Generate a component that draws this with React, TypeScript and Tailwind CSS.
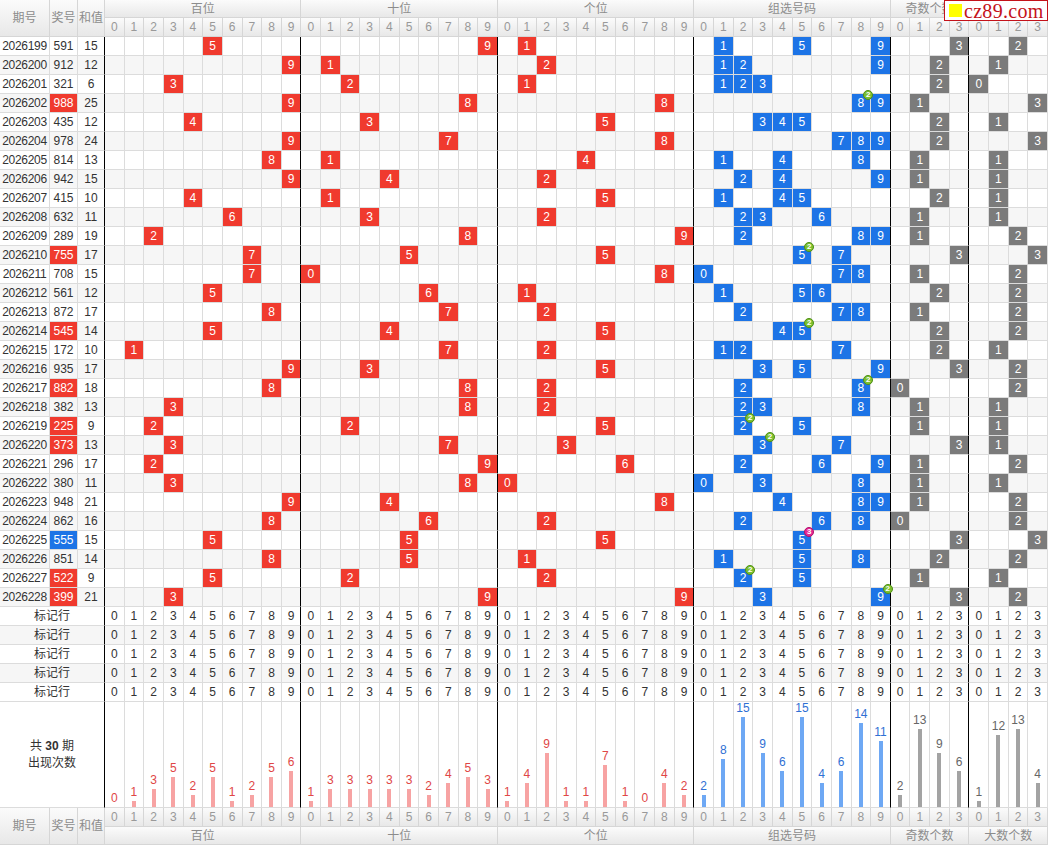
import React from "react";

const COLS = "grid grid-cols-[50px_28px_27px_repeat(48,minmax(0,1fr))]";

const draws: [string, string][] = [
  ["2026199", "591"], ["2026200", "912"], ["2026201", "321"], ["2026202", "988"],
  ["2026203", "435"], ["2026204", "978"], ["2026205", "814"], ["2026206", "942"],
  ["2026207", "415"], ["2026208", "632"], ["2026209", "289"], ["2026210", "755"],
  ["2026211", "708"], ["2026212", "561"], ["2026213", "872"], ["2026214", "545"],
  ["2026215", "172"], ["2026216", "935"], ["2026217", "882"], ["2026218", "382"],
  ["2026219", "225"], ["2026220", "373"], ["2026221", "296"], ["2026222", "380"],
  ["2026223", "948"], ["2026224", "862"], ["2026225", "555"], ["2026226", "851"],
  ["2026227", "522"], ["2026228", "399"],
];

const groups = [
  { name: "百位", size: 10 },
  { name: "十位", size: 10 },
  { name: "个位", size: 10 },
  { name: "组选号码", size: 10 },
  { name: "奇数个数", size: 4 },
  { name: "大数个数", size: 4 },
];

// column index -> digit label
const colDigits: number[] = [];
groups.forEach((g) => {
  for (let i = 0; i < g.size; i++) colDigits.push(i);
});
// last column of each group gets the black line
const boundaries = new Set([9, 19, 29, 39, 43]);

type Cell = { kind: "red" | "blue" | "gray" | null; text?: string; badge?: number; hits: number };

function buildCells(num: string): Cell[] {
  const d = num.split("").map(Number);
  const cells: Cell[] = Array.from({ length: 48 }, () => ({ kind: null, hits: 0 }));
  cells[d[0]] = { kind: "red", text: String(d[0]), hits: 1 };
  cells[10 + d[1]] = { kind: "red", text: String(d[1]), hits: 1 };
  cells[20 + d[2]] = { kind: "red", text: String(d[2]), hits: 1 };
  const counts: Record<number, number> = {};
  d.forEach((x) => (counts[x] = (counts[x] || 0) + 1));
  Object.keys(counts).forEach((k) => {
    const n = Number(k);
    cells[30 + n] = { kind: "blue", text: k, badge: counts[n] > 1 ? counts[n] : undefined, hits: counts[n] };
  });
  const odd = d.filter((x) => x % 2 === 1).length;
  const big = d.filter((x) => x >= 5).length;
  cells[40 + odd] = { kind: "gray", text: String(odd), hits: 1 };
  cells[44 + big] = { kind: "gray", text: String(big), hits: 1 };
  return cells;
}

const allCells = draws.map(([, n]) => buildCells(n));
const stats: number[] = Array.from({ length: 48 }, (_, c) => allCells.reduce((s, r) => s + r[c].hits, 0));

const fill = {
  red: "bg-[#f03a2e] text-white",
  blue: "bg-[#1d74e6] text-white",
  gray: "bg-[#7b7b7b] text-white",
};

function lineCls(c: number) {
  return boundaries.has(c) ? "border-r-black" : "border-r-[#dcdcdc]";
}

const headBg = "bg-linear-to-b from-[#fbfbfb] to-[#e8e8e8]";

function Header() {
  return (
    <div className={`${COLS} grid-rows-[18px_19px] text-[#8c8c8c]`}>
      {["期号", "奖号", "和值"].map((t) => (
        <div key={t} className={`row-span-2 flex items-center justify-center border-r border-b border-[#d6d6d6] text-[12px] ${headBg}`}>
          {t}
        </div>
      ))}
      {groups.map((g) => (
        <div
          key={g.name}
          className={`flex items-center justify-center border-r border-b border-[#d6d6d6] text-[12px] ${headBg} ${g.size === 10 ? "col-span-10" : "col-span-4"}`}
        >
          {g.name}
        </div>
      ))}
      {colDigits.map((d, c) => (
        <div key={c} className={`flex items-center justify-center border-r border-b border-[#d6d6d6] text-[12px] text-[#999] ${headBg}`}>
          {d}
        </div>
      ))}
    </div>
  );
}

function DataRow({ issue, num, idx }: { issue: string; num: string; idx: number }) {
  const d = num.split("").map(Number);
  const sum = d[0] + d[1] + d[2];
  const distinct = new Set(d).size;
  const cells = allCells[idx];
  const numBg = distinct === 1 ? "bg-[#1d74e6] text-white" : distinct === 2 ? "bg-[#f03a2e] text-white" : "";
  const rowBg = idx % 2 === 1 ? "bg-[#f6f6f6]" : "bg-white";
  return (
    <div className={`${COLS} h-[19px] ${rowBg} text-[#333]`}>
      <div className="flex items-center justify-center border-r border-b border-[#dcdcdc] tracking-[-0.3px]">{issue}</div>
      <div className={`flex items-center justify-center border-r border-b border-[#dcdcdc] ${numBg}`}>{num}</div>
      <div className="flex items-center justify-center border-r border-b border-r-black border-b-[#dcdcdc]">{sum}</div>
      {cells.map((cell, c) => (
        <div
          key={c}
          className={`relative flex items-center justify-center border-r border-b border-b-[#dcdcdc] ${lineCls(c)} ${cell.kind ? fill[cell.kind] : ""}`}
        >
          {cell.text}
          {cell.badge && (
            <span
              className={`absolute -top-[4px] -right-[3px] z-10 flex h-[10px] w-[10px] items-center justify-center rounded-full border text-[8px] font-bold leading-none text-white ${
                cell.badge === 3 ? "border-[#b0106a] bg-[#e62a95]" : "border-[#4f8f14] bg-[#7cc030]"
              }`}
            >
              {cell.badge}
            </span>
          )}
        </div>
      ))}
    </div>
  );
}

function MarkRow({ idx }: { idx: number }) {
  return (
    <div className={`${COLS} h-[19px] ${idx % 2 === 1 ? "bg-[#f6f6f6]" : "bg-white"} text-[#333]`}>
      <div className="col-span-3 flex items-center justify-center border-r border-b border-r-black border-b-[#dcdcdc] text-[12px]">
        标记行
      </div>
      {colDigits.map((d, c) => (
        <div key={c} className={`flex items-center justify-center border-r border-b border-b-[#dcdcdc] ${lineCls(c)}`}>
          {d}
        </div>
      ))}
    </div>
  );
}

function StatsRow() {
  const tone = (c: number) =>
    c < 30
      ? { bar: "bg-[#f7a3a3]", txt: "text-[#e04646]" }
      : c < 40
      ? { bar: "bg-[#6ea8f4]", txt: "text-[#2f70d4]" }
      : { bar: "bg-[#a3a3a3]", txt: "text-[#666]" };
  return (
    <div className={`${COLS} h-[106px] bg-white`}>
      <div className="col-span-3 flex flex-col items-center justify-center border-r border-b border-r-black border-b-[#dcdcdc] text-[12px] leading-[17px] text-[#333]">
        <div>
          共 <b>30</b> 期
        </div>
        <div>出现次数</div>
      </div>
      {stats.map((n, c) => {
        const t = tone(c);
        return (
          <div key={c} className={`flex flex-col items-center justify-end border-r border-b border-b-[#dcdcdc] ${lineCls(c)}`}>
            <span className={`mb-[2px] text-[12px] leading-[13px] ${t.txt}`}>{n}</span>
            <div className={`w-[4px] ${t.bar}`} style={{ height: n * 6 }} />
          </div>
        );
      })}
    </div>
  );
}

function Footer() {
  return (
    <div className={`${COLS} grid-rows-[19px_18px] text-[#8c8c8c]`}>
      {["期号", "奖号", "和值"].map((t) => (
        <div key={t} className={`row-span-2 flex items-center justify-center border-r border-b border-[#d6d6d6] text-[12px] ${headBg}`}>
          {t}
        </div>
      ))}
      {colDigits.map((d, c) => (
        <div key={c} className={`flex items-center justify-center border-r border-b border-[#d6d6d6] text-[12px] text-[#999] ${headBg}`}>
          {d}
        </div>
      ))}
      {groups.map((g) => (
        <div
          key={g.name}
          className={`flex items-center justify-center border-r border-b border-[#d6d6d6] text-[12px] ${headBg} ${g.size === 10 ? "col-span-10" : "col-span-4"}`}
        >
          {g.name}
        </div>
      ))}
    </div>
  );
}

export default function App() {
  return (
    <div className="relative w-[1048px] h-[845px] overflow-hidden bg-white text-[12px] leading-none font-['Liberation_Sans','Noto_Sans_CJK_SC',sans-serif]">
      <Header />
      {draws.map(([issue, num], i) => (
        <DataRow key={issue} issue={issue} num={num} idx={i} />
      ))}
      {[0, 1, 2, 3, 4].map((i) => (
        <MarkRow key={i} idx={i} />
      ))}
      <StatsRow />
      <Footer />
      <div className="absolute right-0 top-0 z-20 flex h-[21px] w-[104px] items-center border border-[#c4121a] bg-white">
        <span className="ml-[4px] mr-[2px] h-[13px] w-[13px] bg-[#ffff00]" />
        <span className="font-['Liberation_Serif',serif] text-[20px] leading-none tracking-[0.3px] text-[#c4121a]">cz89.com</span>
      </div>
    </div>
  );
}
